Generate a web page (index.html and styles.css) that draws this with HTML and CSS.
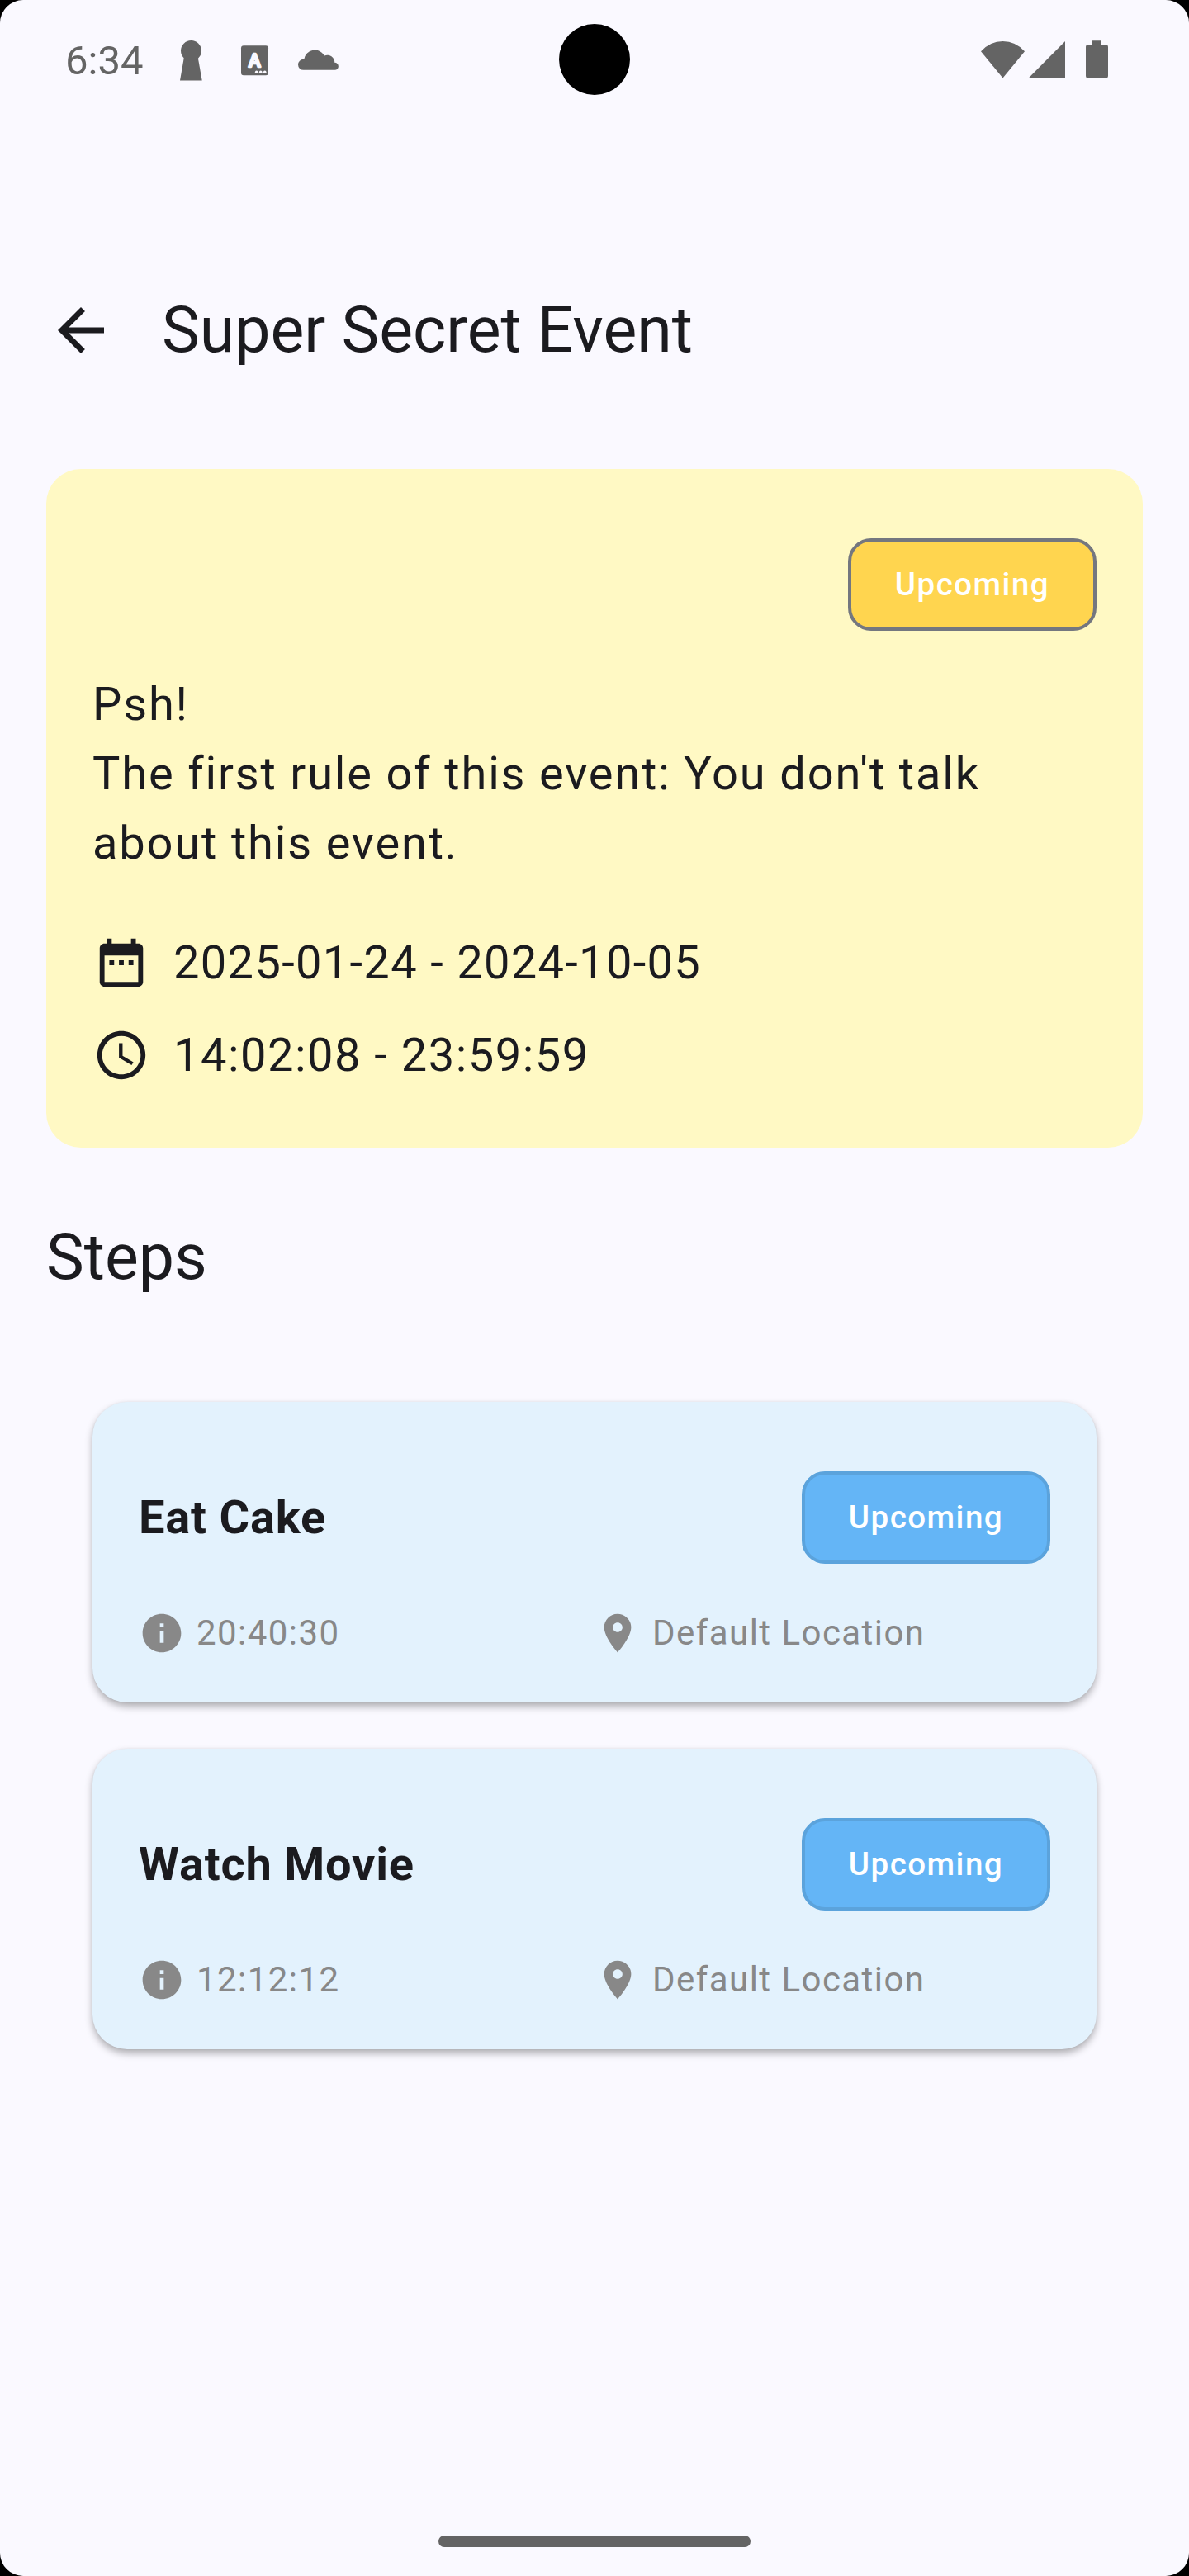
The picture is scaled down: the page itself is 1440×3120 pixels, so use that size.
FILE: index.html
```html
<!DOCTYPE html>
<html lang="en">
<head>
<meta charset="utf-8">
<title>Super Secret Event</title>
<link rel="stylesheet" href="styles.css">
</head>
<body>
<div class="screen">
  <header class="status-bar">
    <span class="clock">6:34</span>
    <svg class="notifications" viewBox="210 40 210 64">
      <path d="M222.8 70 218 97.6h26.700L239.800 70z"/>
      <circle cx="231.500" cy="61.500" r="12.500"/>
      <rect x="292" y="55.300" width="33" height="36" rx="3"/>
      <text class="badge-letter" x="308.200" y="81" text-anchor="middle">A</text>
      <g class="badge-dots"><circle cx="310.700" cy="87.200" r="1.800"/><circle cx="315.700" cy="87.200" r="1.800"/><circle cx="320.700" cy="87.200" r="1.800"/></g>
      <path d="M367.500 84.800A6.500 6.500 0 0 1 367.500 71.800h.800A13.200 13.200 0 0 1 393 67.600a8.600 8.600 0 0 1 12.200 8.200 4.500 4.500 0 0 1 .300 9z"/>
    </svg>
    <span class="camera"></span>
    <svg class="system" viewBox="1180 40 170 64">
      <path d="M1188 62.300Q1199 50 1214.500 50T1241 62.300L1214.500 94.600z"/>
      <path d="M1290 50v44.700h-44.500z"/>
      <path d="M1322.700 49.300h11.200V54h5.100a3 3 0 0 1 3 3v34.700a3 3 0 0 1-3 3h-21a3 3 0 0 1-3-3V57a3 3 0 0 1 3-3h4.700z"/>
    </svg>
  </header>

  <nav class="app-bar">
    <svg class="icon-back" viewBox="0 0 24 24"><path d="M20 11H7.830l5.590-5.590L12 4l-8 8 8 8 1.410-1.410L7.830 13H20v-2z"/></svg>
    <h1 class="title">Super Secret Event</h1>
  </nav>

  <main class="content">
    <section class="event-card">
      <div class="chip-row"><span class="chip chip-event">Upcoming</span></div>
      <p class="description">Psh!<br>The first rule of this event: You don't talk about this event.</p>
      <div class="detail detail-date">
        <svg class="icon-detail" viewBox="0 0 24 24"><path d="M9 11H7v2h2v-2zm4 0h-2v2h2v-2zm4 0h-2v2h2v-2zm2-7h-1V2h-2v2H8V2H6v2H5c-1.110 0-1.990.9-1.990 2L3 20c0 1.100.89 2 2 2h14c1.100 0 2-.9 2-2V6c0-1.100-.9-2-2-2zm0 16H5V9h14v11z"/></svg>
        <span>2025-01-24 - 2024-10-05</span>
      </div>
      <div class="detail detail-time">
        <svg class="icon-detail" viewBox="0 0 24 24"><path d="M11.990 2C6.470 2 2 6.480 2 12s4.470 10 9.990 10C17.520 22 22 17.520 22 12S17.520 2 11.990 2zM12 20c-4.420 0-8-3.580-8-8s3.580-8 8-8 8 3.580 8 8-3.580 8-8 8zm.5-13H11v6l5.250 3.150.75-1.230-4.500-2.670z"/></svg>
        <span>14:02:08 - 23:59:59</span>
      </div>
    </section>

    <h2 class="title steps-title">Steps</h2>

    <section class="steps">
      <article class="step">
        <div class="step-head"><h3 class="step-name">Eat Cake</h3><span class="chip chip-step">Upcoming</span></div>
        <div class="step-meta">
          <div class="meta"><svg class="icon-meta" viewBox="0 0 24 24"><path d="M12 2C6.480 2 2 6.480 2 12s4.480 10 10 10 10-4.480 10-10S17.520 2 12 2zm1 15h-2v-6h2v6zm0-8h-2V7h2v2z"/></svg><span>20:40:30</span></div>
          <div class="meta"><svg class="icon-meta" viewBox="0 0 24 24"><path d="M12 2C8.130 2 5 5.130 5 9c0 5.250 7 13 7 13s7-7.750 7-13c0-3.870-3.130-7-7-7zm0 9.500c-1.380 0-2.500-1.120-2.500-2.500s1.120-2.500 2.500-2.500 2.500 1.120 2.500 2.500-1.120 2.500-2.500 2.500z"/></svg><span>Default Location</span></div>
        </div>
      </article>
      <article class="step">
        <div class="step-head"><h3 class="step-name">Watch Movie</h3><span class="chip chip-step">Upcoming</span></div>
        <div class="step-meta">
          <div class="meta"><svg class="icon-meta" viewBox="0 0 24 24"><path d="M12 2C6.480 2 2 6.480 2 12s4.480 10 10 10 10-4.480 10-10S17.520 2 12 2zm1 15h-2v-6h2v6zm0-8h-2V7h2v2z"/></svg><span>12:12:12</span></div>
          <div class="meta"><svg class="icon-meta" viewBox="0 0 24 24"><path d="M12 2C8.130 2 5 5.130 5 9c0 5.250 7 13 7 13s7-7.750 7-13c0-3.870-3.130-7-7-7zm0 9.500c-1.380 0-2.500-1.120-2.500-2.500s1.120-2.500 2.500-2.500 2.500 1.120 2.500 2.500-1.120 2.500-2.500 2.500z"/></svg><span>Default Location</span></div>
        </div>
      </article>
    </section>
  </main>

  <footer class="nav-bar"><span class="nav-handle"></span></footer>
</div>
</body>
</html>
```
FILE: styles.css
```css
* {
  box-sizing: border-box;
  margin: 0;
  padding: 0;
}

body {
  background: #000;
  font-family: Roboto, "Liberation Sans", sans-serif;
  color: #1b1b1f;
}

svg {
  display: block;
  flex: none;
  fill: currentColor;
}

.screen {
  width: 1440px;
  height: 3120px;
  display: flex;
  flex-direction: column;
  background: #faf9ff;
  border-radius: 28px;
  overflow: hidden;
}

/* Status bar */
.status-bar {
  position: relative;
  height: 144px;
  display: flex;
  align-items: center;
  padding: 0 90px 0 79px;
  color: #646464;
}

.clock {
  width: 131px;
  padding-top: 4px;
  font-size: 49px;
  line-height: 58px;
}

.notifications {
  width: 210px;
  height: 64px;
}

.badge-letter {
  font-size: 22px;
  font-weight: 500;
  fill: #faf9ff;
  stroke: #faf9ff;
  stroke-width: 2.4;
  stroke-linejoin: round;
}

.badge-dots {
  fill: #faf9ff;
}

.camera {
  position: absolute;
  left: 677px;
  top: 29px;
  width: 86px;
  height: 86px;
  border-radius: 50%;
  background: #000;
}

.system {
  width: 170px;
  height: 64px;
  margin-left: auto;
}

/* App bar */
.app-bar {
  display: flex;
  align-items: center;
  gap: 56px;
  height: 224px;
  margin-top: 144px;
  padding: 0 56px;
}

.icon-back {
  width: 84px;
  height: 84px;
}

.title {
  font-size: 77px;
  line-height: 98px;
  font-weight: 400;
}

.content {
  flex: 1;
  padding: 56px 56px 0;
}

/* Event card */
.event-card {
  height: 822px;
  padding: 84px 56px 0;
  border-radius: 42px;
  background: #fff9c4;
}

.chip-row {
  display: flex;
  justify-content: flex-end;
  margin-bottom: 47px;
}

.chip {
  display: flex;
  align-items: center;
  justify-content: center;
  width: 301px;
  height: 112px;
  border: 4px solid;
  border-radius: 28px;
  font-size: 38.5px;
  line-height: 56px;
  font-weight: 500;
  letter-spacing: 1.5px;
}

.chip-event {
  border-color: #74777f;
  background: #ffd54f;
  color: #fff;
}

.chip-step {
  border-color: #5ba3dc;
  background: #64b5f6;
  color: #fff;
}

.description,
.detail {
  font-size: 56px;
  line-height: 84px;
}

.description {
  margin-bottom: 61px;
  letter-spacing: 1.83px;
}

.detail {
  display: flex;
  align-items: center;
  gap: 28px;
  margin-bottom: 28px;
}

.detail-date {
  letter-spacing: 1.32px;
}

.detail-time {
  letter-spacing: 1.5px;
}

.icon-detail {
  width: 70px;
  height: 70px;
}

/* Steps */
.steps-title {
  margin-top: 84px;
}

.steps {
  display: flex;
  flex-direction: column;
  gap: 56px;
  padding: 126px 56px 0;
}

.step {
  height: 364px;
  padding: 84px 56px 0;
  border-radius: 42px;
  background: #e3f2fd;
  box-shadow: 0 5px 10px rgba(0, 0, 0, 0.3), 0 0 3px rgba(0, 0, 0, 0.06);
}

.step-head {
  display: flex;
  align-items: center;
  justify-content: space-between;
}

.step-name {
  font-size: 56px;
  line-height: 84px;
  font-weight: 700;
  letter-spacing: 0.8px;
}

.step-meta {
  display: grid;
  grid-template-columns: 1fr 1fr;
  margin-top: 56px;
}

.meta {
  display: flex;
  align-items: center;
  gap: 14px;
  font-size: 42px;
  line-height: 56px;
  letter-spacing: 1.45px;
  color: #888;
}

.icon-meta {
  width: 56px;
  height: 56px;
}

/* Gesture navigation */
.nav-bar {
  display: flex;
  justify-content: center;
  height: 49px;
}

.nav-handle {
  width: 378px;
  height: 14px;
  border-radius: 7px;
  background: #646464;
}
```
